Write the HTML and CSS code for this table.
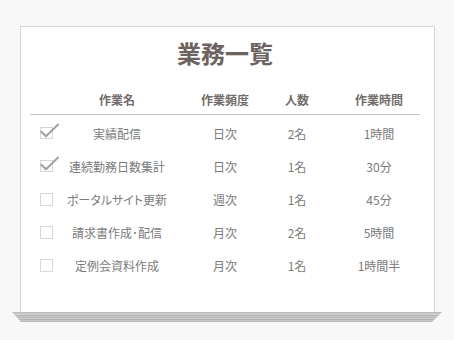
FILE: index.html
```html
<!DOCTYPE html>
<html lang="ja">
<head>
<meta charset="utf-8">
<title>業務一覧</title>
<link rel="stylesheet" href="styles.css">
</head>
<body>
<div class="page">
  <div class="card">
    <h1 class="title">業務一覧</h1>
    <div class="table">
      <div class="row head">
        <span class="c-check"></span>
        <span class="c-name">作業名</span>
        <span class="c-freq">作業頻度</span>
        <span class="c-count">人数</span>
        <span class="c-time">作業時間</span>
      </div>
      <div class="body">
        <div class="row">
          <span class="c-check"><svg class="box" width="20" height="17" viewBox="0 0 20 17"><rect x="0.5" y="4.5" width="12" height="11" fill="#fff" stroke="#d6d6d6"/><polyline points="0.8,8.2 6,13.3 18.6,1" fill="none" stroke="#a2a2a2" stroke-width="2"/></svg></span>
          <span class="c-name">実績配信</span>
          <span class="c-freq">日次</span>
          <span class="c-count">2名</span>
          <span class="c-time">1時間</span>
        </div>
        <div class="row">
          <span class="c-check"><svg class="box" width="20" height="17" viewBox="0 0 20 17"><rect x="0.5" y="4.5" width="12" height="11" fill="#fff" stroke="#d6d6d6"/><polyline points="0.8,8.2 6,13.3 18.6,1" fill="none" stroke="#a2a2a2" stroke-width="2"/></svg></span>
          <span class="c-name">連続勤務日数集計</span>
          <span class="c-freq">日次</span>
          <span class="c-count">1名</span>
          <span class="c-time">30分</span>
        </div>
        <div class="row">
          <span class="c-check"><span class="empty"></span></span>
          <span class="c-name">ポータルサイト更新</span>
          <span class="c-freq">週次</span>
          <span class="c-count">1名</span>
          <span class="c-time">45分</span>
        </div>
        <div class="row">
          <span class="c-check"><span class="empty"></span></span>
          <span class="c-name">請求書作成･配信</span>
          <span class="c-freq">月次</span>
          <span class="c-count">2名</span>
          <span class="c-time">5時間</span>
        </div>
        <div class="row">
          <span class="c-check"><span class="empty"></span></span>
          <span class="c-name">定例会資料作成</span>
          <span class="c-freq">月次</span>
          <span class="c-count">1名</span>
          <span class="c-time">1時間半</span>
        </div>
      </div>
    </div>
  </div>
  <div class="stand"></div>
</div>
</body>
</html>
```
FILE: styles.css
```css
html, body {
  margin: 0;
  padding: 0;
  background: #f8f8f8;
}
body {
  font-family: "Noto Sans CJK JP", "Noto Sans", sans-serif;
  color: #7b7b7b;
}
.page {
  padding-top: 26px;
  width: 454px;
  height: 340px;
  box-sizing: border-box;
}
.card {
  margin-left: 20px;
  width: 415px;
  height: 286px;
  box-sizing: border-box;
  background: #fff;
  border: 1px solid #d4d4d4;
  border-bottom: none;
  padding: 10px 0 0 9px;
}
.title {
  margin: 0;
  width: 390px;
  text-align: center;
  font-size: 24px;
  line-height: 32px;
  font-weight: 700;
  color: #6b6360;
}
.table {
  margin-top: 17px;
  width: 390px;
}
.row {
  display: grid;
  grid-template-columns: 32px 110px 106px 38px 104px;
  align-items: center;
  height: 33px;
  font-size: 12px;
  line-height: 16px;
}
.row > span {
  text-align: center;
  white-space: nowrap;
}
.row .c-name {
  font-feature-settings: "palt";
}
.row .c-time {
  padding-left: 22px;
}
.row .c-check {
  text-align: left;
  padding-left: 10px;
  display: flex;
  align-items: center;
}
.head {
  height: 28px;
  border-bottom: 1px solid #c4c4c4;
  font-weight: 700;
  color: #736c69;
}
.body {
  padding-top: 2px;
}
.box {
  display: block;
  margin-top: -5px;
}
.empty {
  display: block;
  width: 11px;
  height: 11px;
  border: 1px solid #d8d8d8;
  background: #fff;
}
.stand {
  margin-left: 12px;
  width: 430px;
  height: 10px;
  clip-path: polygon(0 0, 100% 0, calc(100% - 10px) 100%, 9px 100%);
  background: linear-gradient(to bottom,
    #bcbcbc 0, #bcbcbc 1px,
    #c8c8c8 1px, #c8c8c8 2px,
    #d2d2d2 2px, #d2d2d2 3px,
    #b4b4b4 3px, #b4b4b4 4px,
    #c9c9c9 4px, #c9c9c9 5px,
    #b9b9b9 5px, #b9b9b9 6px,
    #d0d0d0 6px, #d0d0d0 7px,
    #b2b2b2 7px, #b2b2b2 8px,
    #c6c6c6 8px, #c6c6c6 9px,
    #b8b8b8 9px, #b8b8b8 10px);
}
```
